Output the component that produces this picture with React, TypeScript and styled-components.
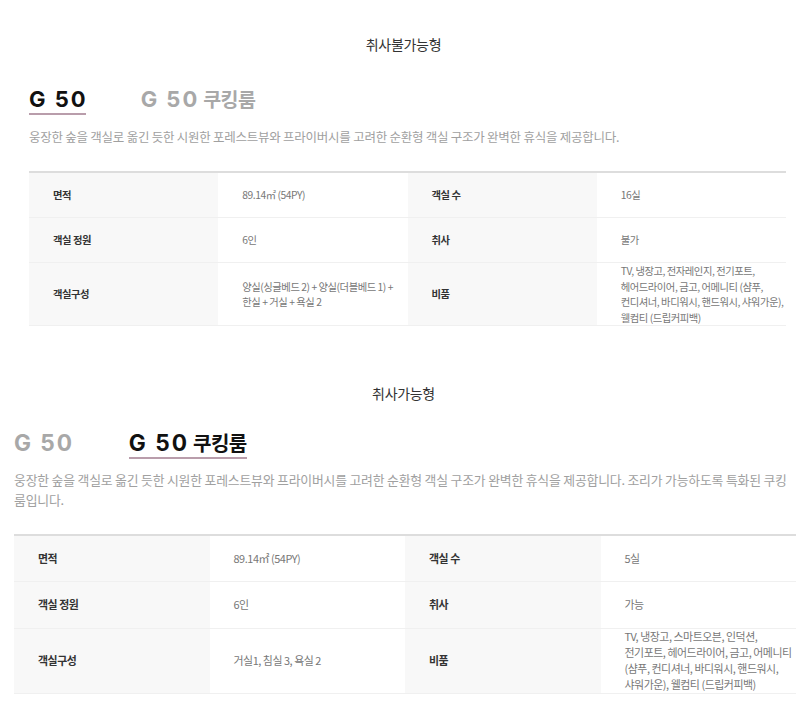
import React from "react";
import styled, { createGlobalStyle } from "styled-components";

const GlobalStyle = createGlobalStyle`
  html, body { margin: 0; padding: 0; background: #ffffff; }
  body {
    font-family: "Noto Sans CJK KR", "Noto Sans", sans-serif;
    color: #333333;
    -webkit-font-smoothing: antialiased;
  }
  * { box-sizing: border-box; }
`;

const Page = styled.div`
  width: 807px;
  padding-top: 34px;
  display: flex;
  flex-direction: column;
`;

const Section = styled.section<{ $top: number }>`
  display: flex;
  flex-direction: column;
  margin-top: ${(p) => p.$top}px;
`;

const Heading = styled.h2`
  margin: 0;
  text-align: center;
  font-size: 14px;
  line-height: 20px;
  font-weight: 400;
  color: #333333;
  letter-spacing: -0.3px;
`;

const Body = styled.div<{ $left: number; $width: number; $scale: number; $tableScale: number }>`
  --s: ${(p) => p.$scale};
  --ts: ${(p) => p.$tableScale};
  margin-left: ${(p) => p.$left}px;
  width: ${(p) => p.$width}px;
  display: flex;
  flex-direction: column;
`;

const Tabs = styled.div<{ $top: number }>`
  display: flex;
  align-items: flex-end;
  gap: calc(55px * var(--s));
  margin-top: ${(p) => p.$top}px;
`;

const Tab = styled.div<{ $active: boolean }>`
  display: flex;
  align-items: baseline;
  gap: calc(6px * var(--s));
  height: 29px;
  line-height: 26px;
  border-bottom: 2px solid ${(p) => (p.$active ? "#b99dab" : "transparent")};
  color: ${(p) => (p.$active ? "#111111" : "#a8a8a8")};
`;

const TabLatin = styled.span`
  font-family: "Inter", "Noto Sans", sans-serif;
  font-weight: 700;
  font-size: calc(22px * var(--s));
  letter-spacing: 2px;
  margin-right: -2px;
`;

const TabKor = styled.span`
  font-family: "Noto Sans CJK KR", sans-serif;
  font-weight: 700;
  font-size: calc(19.5px * var(--s));
  letter-spacing: -0.6px;
`;

const Desc = styled.p<{ $top: number; $ls: number }>`
  margin: ${(p) => p.$top}px 0 0;
  font-size: calc(12.5px * var(--s));
  line-height: 20px;
  color: #a0a0a0;
  letter-spacing: ${(p) => p.$ls}px;
`;

const Table = styled.div<{ $top: number }>`
  margin-top: ${(p) => p.$top}px;
  border-top: 2px solid #dddddd;
  display: grid;
  grid-template-columns: repeat(4, 1fr);
`;

const Cell = styled.div<{ $label?: boolean }>`
  min-height: calc(45px * var(--s));
  display: flex;
  align-items: center;
  padding: 0 0 0 24px;
  border-bottom: 1px solid #f0f0f0;
  background: ${(p) => (p.$label ? "#f8f8f8" : "#ffffff")};
  font-size: calc(10.3px * var(--ts));
  line-height: calc(15.5px * var(--s));
  font-weight: ${(p) => (p.$label ? 700 : 400)};
  color: ${(p) => (p.$label ? "#333333" : "#777777")};
  letter-spacing: -0.45px;
  word-break: keep-all;
`;

type Row = [string, string, string, string];

interface RoomProps {
  title: string;
  active: 0 | 1;
  desc: string;
  rows: Row[];
  left: number;
  width: number;
  scale: number;
  tableScale: number;
  top: number;
  tabTop: number;
  descTop: number;
  descLs: number;
  tableTop: number;
}

const Room: React.FC<RoomProps> = ({
  title,
  active,
  desc,
  rows,
  left,
  width,
  scale,
  tableScale,
  top,
  tabTop,
  descTop,
  descLs,
  tableTop,
}) => (
  <Section $top={top}>
    <Heading>{title}</Heading>
    <Body $left={left} $width={width} $scale={scale} $tableScale={tableScale}>
      <Tabs $top={tabTop}>
        <Tab $active={active === 0}>
          <TabLatin>G 50</TabLatin>
        </Tab>
        <Tab $active={active === 1}>
          <TabLatin>G 50</TabLatin>
          <TabKor>쿠킹룸</TabKor>
        </Tab>
      </Tabs>
      <Desc $top={descTop} $ls={descLs}>
        {desc}
      </Desc>
      <Table $top={tableTop}>
        {rows.map((r, i) => (
          <React.Fragment key={i}>
            <Cell $label>{r[0]}</Cell>
            <Cell>{r[1]}</Cell>
            <Cell $label>{r[2]}</Cell>
            <Cell>{r[3]}</Cell>
          </React.Fragment>
        ))}
      </Table>
    </Body>
  </Section>
);

const baseDesc =
  "웅장한 숲을 객실로 옮긴 듯한 시원한 포레스트뷰와 프라이버시를 고려한 순환형 객실 구조가 완벽한 휴식을 제공합니다.";

export default function App() {
  return (
    <>
      <GlobalStyle />
      <Page>
        <Room
          title="취사불가능형"
          active={0}
          desc={baseDesc}
          left={29}
          width={757}
          scale={1}
          tableScale={1}
          top={0}
          tabTop={32}
          descTop={12}
          descLs={-0.25}
          tableTop={24}
          rows={[
            ["면적", "89.14㎡ (54PY)", "객실 수", "16실"],
            ["객실 정원", "6인", "취사", "불가"],
            [
              "객실구성",
              "양실(싱글베드 2) + 양실(더블베드 1) + 한실 + 거실 + 욕실 2",
              "비품",
              "TV, 냉장고, 전자레인지, 전기포트, 헤어드라이어, 금고, 어메니티 (샴푸, 컨디셔너, 바디워시, 핸드워시, 샤워가운), 웰컴티 (드립커피백)",
            ],
          ]}
        />
        <Room
          title="취사가능형"
          active={1}
          desc={baseDesc + " 조리가 가능하도록 특화된 쿠킹룸입니다."}
          left={14}
          width={782}
          scale={1.03}
          tableScale={1.06}
          top={57}
          tabTop={27}
          descTop={11}
          descLs={-0.2}
          tableTop={24}
          rows={[
            ["면적", "89.14㎡ (54PY)", "객실 수", "5실"],
            ["객실 정원", "6인", "취사", "가능"],
            [
              "객실구성",
              "거실1, 침실 3, 욕실 2",
              "비품",
              "TV, 냉장고, 스마트오븐, 인덕션, 전기포트, 헤어드라이어, 금고, 어메니티 (샴푸, 컨디셔너, 바디워시, 핸드워시, 샤워가운), 웰컴티 (드립커피백)",
            ],
          ]}
        />
      </Page>
    </>
  );
}
